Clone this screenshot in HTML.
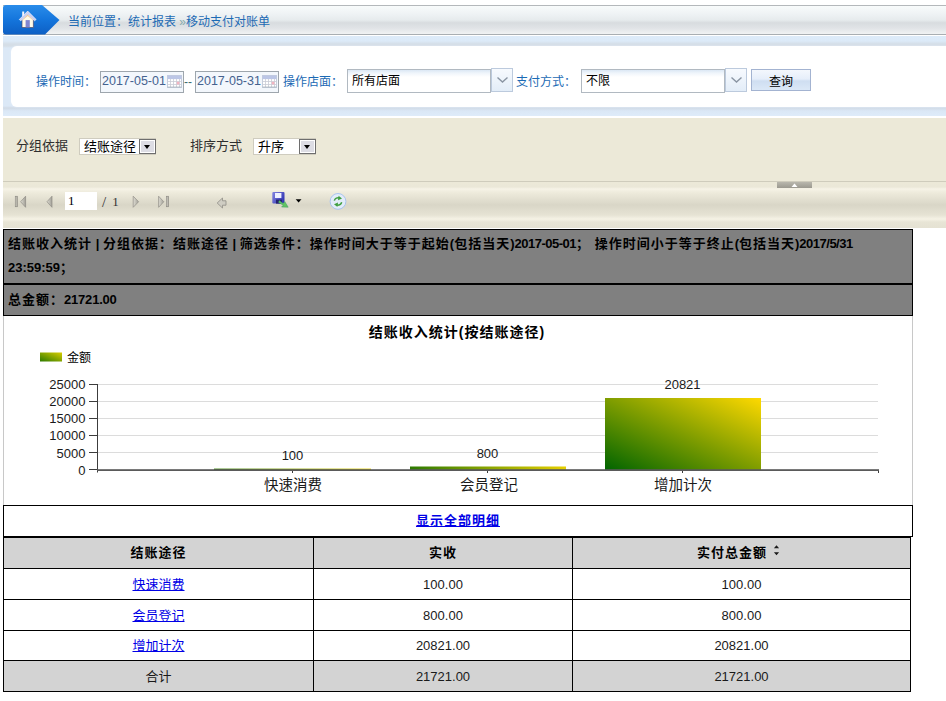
<!DOCTYPE html>
<html lang="zh-CN">
<head>
<meta charset="utf-8">
<title>移动支付对账单</title>
<style>
html,body{margin:0;padding:0;background:#fff;}
body{width:946px;height:701px;position:relative;overflow:hidden;font-family:"Liberation Sans","Noto Sans CJK SC","WenQuanYi Zen Hei",sans-serif;font-size:12px;color:#000;}
.abs{position:absolute;white-space:nowrap;}
/* breadcrumb */
#crumb{left:3px;top:5px;width:943px;height:30px;border-top:1px solid #b4b8bb;border-bottom:1px solid #a9aeb2;box-sizing:border-box;background:linear-gradient(#f8fbfb 0%,#eef2f4 30%,#e6ebed 50%,#d8dcdf 60%,#e0e3e6 78%,#f0f2f3 100%);}
#crumbtxt{left:68px;top:14px;font-size:12px;line-height:16px;color:#1c6ab4;}
/* filter panel */
#fpanel{left:3px;top:36px;width:943px;height:80px;background:linear-gradient(#ddebf9 0,#dceaf8 5px,#d5dee7 8px,#d5dee7 10px,#dbe8f6 12px,#dbe8f6 70px,#d0dae6 72px,#dbe8f6 75px,#deebf9 80px);}
#finner{left:11px;top:46px;width:940px;height:61px;background:#fff;border-radius:6px 0 0 6px;box-shadow:0 0 2px #e8f0fa;}
.lbl{font-size:12px;line-height:16px;color:#1c6ab4;}
.date{box-sizing:border-box;height:22px;width:84px;top:71px;border:1px solid #9ea6ad;background:#f3f7fc;font-size:12.5px;line-height:19px;color:#45628f;padding-left:1px;}
.combo{box-sizing:border-box;top:69px;height:24px;border:1px solid #b1b9c1;background:linear-gradient(#dbe7f4 0px,#eff5fb 3px,#fff 7px);font-size:12px;line-height:22px;padding-left:4px;color:#000;}
.carrow{box-sizing:border-box;top:68px;width:22px;height:24px;border:1px solid #bccadd;background:linear-gradient(#f7fafe,#e3edf8);}
#qbtn{left:751px;top:69px;width:60px;height:22px;box-sizing:border-box;border:1px solid #a3b3d1;background:linear-gradient(#f3f7fd 0%,#e6eefa 45%,#cfdef1 55%,#dbe8f7 100%);text-align:center;font-size:12px;line-height:25px;color:#000;overflow:hidden;}
/* beige area */
#beige{left:3px;top:118px;width:943px;height:110px;background:#ece9d8;}
.blbl{font-size:13px;line-height:16px;color:#2e2e2e;}
.bsel{box-sizing:border-box;height:17px;border:1px solid #cfccbf;background:#fff;font-size:13px;line-height:15px;padding-left:4px;color:#000;}
.bsel i{position:absolute;right:-1px;top:0px;width:17px;height:15px;box-sizing:border-box;border:1px solid #6e6e6e;background:#dddde4;box-shadow:inset 0 0 0 1px #fff;}
.bsel i:after{content:"";position:absolute;left:4px;top:5px;border:3.5px solid transparent;border-top:4px solid #000;border-bottom:0;}

/* toolbar */
#tsep{left:3px;top:181px;width:943px;height:1px;background:#cfccbc;}
#tbar{left:3px;top:182px;width:943px;height:46px;background:linear-gradient(#ece9d8 0px,#ebe8d8 5px,#f6f3e7 7px,#efecdd 10px,#d9d6c7 23px,#e6e3d4 33px,#f5f2e5 37px,#e8e5d6 40px,#e5e2d3 46px);}
#handle{left:777px;top:182px;width:35px;height:6px;background:linear-gradient(#b9b7ad,#9b998f);}
#pg{left:65px;top:192px;width:32px;height:18px;background:#fff;font-family:"Liberation Serif",serif;font-size:13px;line-height:18px;padding-left:3px;box-sizing:border-box;}
#pgof{left:102px;top:193px;font-family:"Liberation Serif",serif;font-size:13px;line-height:16px;color:#333;}
/* report */
#rhead{left:3px;top:229px;width:910px;height:87px;background:#808080;box-sizing:border-box;border:1px solid #000;}
#rline{left:3px;top:283px;width:910px;height:2px;background:#000;}
.rt b{letter-spacing:0;font-weight:bold;}
.rt b.n{letter-spacing:-0.5px;}
.rt{font-family:"Liberation Sans","Noto Sans CJK SC",sans-serif;font-weight:bold;font-size:13px;line-height:24px;color:#000;}
#chartbox{left:3px;top:316px;width:910px;height:189px;box-sizing:border-box;border-left:1px solid #c8c8c8;border-right:1px solid #c8c8c8;background:#fff;}
#showall{font-family:"Liberation Sans","Noto Sans CJK SC",sans-serif;left:3px;top:505px;width:910px;height:32px;box-sizing:border-box;border:1px solid #000;background:#fff;text-align:center;font-size:13px;line-height:30px;font-weight:bold;}
#showall a{letter-spacing:1px;color:#0000e6;text-decoration:underline;}
table#grid{position:absolute;left:3px;top:537px;width:907px;border-collapse:collapse;table-layout:fixed;font-size:13px;}
#grid td,#grid th{border:1px solid #000;text-align:center;padding:0;height:30px;font-weight:normal;color:#1a1a1a;}
#grid th{letter-spacing:1px;font-family:"Liberation Sans","Noto Sans CJK SC",sans-serif;font-weight:bold;background:#d3d3d3;color:#000;}
#grid th span{position:relative;top:-2px;}
#grid tr.tot td{background:#d3d3d3;height:30px;}
#grid tr.s td{height:29px;}
#grid a,#grid td span{color:#0000e6;text-decoration:underline;position:relative;top:-1px;}
#grid td span{color:#1a1a1a;text-decoration:none;}
</style>
</head>
<body>
<!-- breadcrumb -->
<div class="abs" id="crumb"></div>
<svg class="abs" style="left:3px;top:5px" width="58" height="30" viewBox="0 0 58 30">
  <defs><linearGradient id="hb" x1="0" y1="0" x2="0" y2="1"><stop offset="0" stop-color="#2a8cea"/><stop offset="0.5" stop-color="#1475dc"/><stop offset="1" stop-color="#0d5fc4"/></linearGradient></defs>
  <path d="M3 0 H39 L56.5 15 L42 29.5 H3 Q0 29.5 0 26.5 V3 Q0 0 3 0Z" fill="url(#hb)"/>
  <g transform="translate(16,4.5)">
    <rect x="3.2" y="2" width="2" height="5" fill="#f6f6fa"/>
    <path d="M3 10 L8.7 4.6 L14.4 10 V18 H3Z" fill="#fffbe9" stroke="#4a4a6a" stroke-width="0.7"/>
    <path d="M3.2 10.2 L8.7 5 L14.2 10.2 L14.2 11 L8.7 6.6 L3.2 11Z" fill="#f2c79a"/>
    <path d="M0.3 10 L8.7 1.6 L17.1 10 L15.6 11.2 L8.7 4.6 L1.8 11.2Z" fill="#c9cdf0" stroke="#f4f4ff" stroke-width="0.7"/>
    <rect x="6.6" y="10.6" width="4.2" height="7.2" fill="#7f86d2"/>
  </g>
</svg>
<div class="abs" id="crumbtxt">当前位置：统计报表 <span style="color:#8aa">»</span>移动支付对账单</div>

<!-- filter panel -->
<div class="abs" id="fpanel"></div>
<div class="abs" id="finner"></div>
<div class="abs lbl" style="left:36px;top:74px">操作时间：</div>
<div class="abs date" style="left:100px">2017-05-01</div>
<div class="abs" style="left:184px;top:74px;color:#3d6a6e;font-size:12px;line-height:16px">--</div>
<div class="abs date" style="left:195px">2017-05-31</div>
<svg class="abs cal" style="left:167px;top:75px" width="15" height="13" viewBox="0 0 15 13"><rect x="0.5" y="0.5" width="14" height="12" fill="#fff" stroke="#c6cedc"/><rect x="0.5" y="0.5" width="14" height="3.6" fill="#bcc6e6"/><g stroke="#c9ccd6" stroke-width="0.8"><path d="M0.5 6.5H14.5M0.5 9.5H14.5M3.5 4V12.5M6.5 4V12.5M9.5 4V12.5M12.5 4V12.5"/></g><rect x="9.8" y="6.8" width="2.6" height="2.6" fill="#f3b4c0"/><rect x="0.5" y="11.5" width="14" height="1" fill="#9aa6b0" opacity="0.6"/></svg>
<svg class="abs cal" style="left:262px;top:75px" width="15" height="13" viewBox="0 0 15 13"><rect x="0.5" y="0.5" width="14" height="12" fill="#fff" stroke="#c6cedc"/><rect x="0.5" y="0.5" width="14" height="3.6" fill="#bcc6e6"/><g stroke="#c9ccd6" stroke-width="0.8"><path d="M0.5 6.5H14.5M0.5 9.5H14.5M3.5 4V12.5M6.5 4V12.5M9.5 4V12.5M12.5 4V12.5"/></g><rect x="9.8" y="6.8" width="2.6" height="2.6" fill="#f3b4c0"/><rect x="0.5" y="11.5" width="14" height="1" fill="#9aa6b0" opacity="0.6"/></svg>
<div class="abs lbl" style="left:283px;top:74px">操作店面：</div>
<div class="abs combo" style="left:347px;width:144px">所有店面</div>
<div class="abs carrow" style="left:491px"></div>
<div class="abs lbl" style="left:516px;top:74px">支付方式：</div>
<div class="abs combo" style="left:581px;width:144px">不限</div>
<div class="abs carrow" style="left:725px"></div>
<svg class="abs" style="left:491.5px;top:68.5px" width="21" height="23" viewBox="0 0 21 23"><path d="M5.5 8.5 L10.5 13 L15.5 8.5" fill="none" stroke="#8a95a3" stroke-width="1.4"/></svg>
<svg class="abs" style="left:725.5px;top:68.5px" width="21" height="23" viewBox="0 0 21 23"><path d="M5.5 8.5 L10.5 13 L15.5 8.5" fill="none" stroke="#8a95a3" stroke-width="1.4"/></svg>
<div class="abs" id="qbtn">查询</div>

<!-- beige -->
<div class="abs" id="beige"></div>
<div class="abs blbl" style="left:16px;top:138px">分组依据</div>
<div class="abs bsel" style="left:79px;top:138px;width:77px">结账途径<i></i></div>
<div class="abs blbl" style="left:190px;top:138px">排序方式</div>
<div class="abs bsel" style="left:253px;top:138px;width:63px">升序<i></i></div>

<!-- toolbar -->
<div class="abs" id="tsep"></div>
<div class="abs" id="tbar"></div>
<div class="abs" id="handle"></div>
<svg class="abs" style="left:0;top:182px" width="400" height="40" viewBox="0 182 400 40">
  <defs>
    <linearGradient id="gg" x1="0" y1="0" x2="1" y2="0"><stop offset="0" stop-color="#e0ded4"/><stop offset="1" stop-color="#a09e96"/></linearGradient>
    <linearGradient id="sv" x1="0" y1="0" x2="1" y2="0.6"><stop offset="0" stop-color="#8486e0"/><stop offset="1" stop-color="#3336b4"/></linearGradient>
  </defs>
  <!-- first -->
  <rect x="15.3" y="196.3" width="2" height="10.4" fill="url(#gg)" stroke="#8f8d85" stroke-width="0.7"/>
  <path d="M25.6 196.2 L25.6 207.3 L20.6 201.75Z" fill="url(#gg)" stroke="#8f8d85" stroke-width="0.7"/>
  <!-- prev -->
  <path d="M52 196.2 L52 207.3 L47 201.75Z" fill="url(#gg)" stroke="#8f8d85" stroke-width="0.7"/>
  <!-- next -->
  <path d="M133.2 196.2 L133.2 207.3 L138.6 201.75Z" fill="url(#gg)" stroke="#8f8d85" stroke-width="0.7"/>
  <!-- last -->
  <path d="M158.6 196.2 L158.6 207.3 L163.8 201.75Z" fill="url(#gg)" stroke="#8f8d85" stroke-width="0.7"/>
  <rect x="166.4" y="196.3" width="2" height="10.4" fill="url(#gg)" stroke="#8f8d85" stroke-width="0.7"/>
  <!-- back -->
  <path d="M217.2 203 L222.5 198 L222.5 200.8 L226 200.8 L226 205.2 L222.5 205.2 L222.5 208Z" fill="#cfcdc3" stroke="#96948c" stroke-width="0.9"/>
  <!-- save/export -->
  <rect x="272.3" y="192" width="12.2" height="11.6" rx="1" fill="url(#sv)"/>
  <rect x="275" y="193" width="6.4" height="5" fill="#eef0ff"/>
  <rect x="276" y="199.6" width="6" height="4" fill="#23236e"/>
  <path d="M279.2 200.6 L283.2 203.6 L284.8 201.6 L288.2 207.2 L281.6 207 L283.2 205.2 L278.6 202.4Z" fill="#62c462" stroke="#3f9a6a" stroke-width="0.5"/>
  <path d="M295.7 199.2 L301.5 199.2 L298.6 202.4Z" fill="#000"/>
  <!-- refresh -->
  <circle cx="338" cy="201.4" r="7.9" fill="#e2ecf9" stroke="#a3c0ee" stroke-width="0.9"/>
  <path d="M334.3 200.6 A3.9 3.9 0 0 1 339.6 198" fill="none" stroke="#3f9f3f" stroke-width="1.5"/>
  <path d="M338.6 195.8 L342 198.6 L338 200.2Z" fill="#3f9f3f"/>
  <path d="M341.7 202.2 A3.9 3.9 0 0 1 336.4 204.8" fill="none" stroke="#3f9f3f" stroke-width="1.5"/>
  <path d="M337.4 207 L334 204.2 L338 202.6Z" fill="#3f9f3f"/>
</svg>
<svg class="abs" style="left:777px;top:182px" width="35" height="6"><path d="M14.5 5 L17.5 1.5 L20.5 5Z" fill="#fff"/></svg>
<div class="abs" id="pg">1</div>
<div class="abs" id="pgof"><span style="font-size:15px;position:relative;top:0.5px">/</span><span style="margin-left:6px">1</span></div>

<!-- report header -->
<div class="abs" id="rhead"></div>
<div class="abs" id="rline"></div>
<div class="abs rt" id="rt1" style="left:8px;top:232px;letter-spacing:1px">结账收入统计<b> | </b>分组依据：结账途径<b> | </b>筛选条件：操作时间大于等于起始<b>(</b>包括当天<b>)</b><b class="n">2017-05-01</b>；<b style="margin-left:1px"> </b>操作时间小于等于终止<b>(</b>包括当天<b>)</b><b class="n">2017/5/31</b></div>
<div class="abs rt" id="rt2" style="left:8px;top:256px">23:59:59；</div>
<div class="abs rt" id="rt3" style="left:8px;top:288px;letter-spacing:1px">总金额：<b style="letter-spacing:-0.2px">21721.00</b></div>

<!-- chart -->
<div class="abs" id="chartbox"></div>
<svg class="abs" id="chart" style="left:3px;top:317px" width="911" height="188" viewBox="3 317 911 188" font-family="'Liberation Sans','Noto Sans CJK SC','WenQuanYi Zen Hei',sans-serif">
  <defs>
    <linearGradient id="bar" x1="0" y1="1" x2="1" y2="0"><stop offset="0" stop-color="#006400"/><stop offset="0.5" stop-color="#7f9d00"/><stop offset="1" stop-color="#ffd900"/></linearGradient>
    <linearGradient id="barh" x1="0" y1="0" x2="1" y2="0"><stop offset="0" stop-color="#2d7a00"/><stop offset="1" stop-color="#e6cf00"/></linearGradient>
    <linearGradient id="leg" x1="0" y1="1" x2="1" y2="0"><stop offset="0" stop-color="#2d7a00"/><stop offset="1" stop-color="#d8cc00"/></linearGradient>
  </defs>
  <text x="457" y="337" text-anchor="middle" font-size="14" font-weight="bold" font-family="'Liberation Sans','Noto Sans CJK SC',sans-serif" fill="#000" letter-spacing="1">结账收入统计(按结账途径)</text>
  <rect x="40" y="352.5" width="22" height="9" fill="url(#leg)"/>
  <text x="67" y="362" font-size="12" fill="#000">金额</text>
  <g stroke="#dcdcdc" stroke-width="1">
    <line x1="98" y1="384.5" x2="878" y2="384.5"/>
    <line x1="98" y1="401.5" x2="878" y2="401.5"/>
    <line x1="98" y1="418.5" x2="878" y2="418.5"/>
    <line x1="98" y1="435.5" x2="878" y2="435.5"/>
    <line x1="98" y1="452.5" x2="878" y2="452.5"/>
  </g>
  <rect x="214" y="468.6" width="157" height="1.4" fill="url(#barh)"/>
  <rect x="410" y="466.5" width="156" height="3.5" fill="url(#barh)"/>
  <rect x="605" y="398" width="156" height="72" fill="url(#bar)"/>
  <g stroke="#3c3c3c" stroke-width="1">
    <line x1="97.5" y1="384" x2="97.5" y2="472.5"/>
    <line x1="89" y1="384.5" x2="98" y2="384.5"/>
    <line x1="89" y1="401.5" x2="98" y2="401.5"/>
    <line x1="89" y1="418.5" x2="98" y2="418.5"/>
    <line x1="89" y1="435.5" x2="98" y2="435.5"/>
    <line x1="89" y1="452.5" x2="98" y2="452.5"/>
    <line x1="89" y1="469.5" x2="98" y2="469.5"/>
    <line x1="292.5" y1="470" x2="292.5" y2="473"/>
    <line x1="487.5" y1="470" x2="487.5" y2="473"/>
    <line x1="682.5" y1="470" x2="682.5" y2="473"/>
    <line x1="878.5" y1="470" x2="878.5" y2="473"/>
  </g>
  <rect x="97" y="469.2" width="782" height="1.8" fill="#5a5a5a"/>
  <g font-size="13" fill="#1a1a1a" text-anchor="end">
    <text x="85.5" y="389">25000</text>
    <text x="85.5" y="406">20000</text>
    <text x="85.5" y="423.3">15000</text>
    <text x="85.5" y="440">10000</text>
    <text x="85.5" y="457.5">5000</text>
    <text x="85.5" y="474.5">0</text>
  </g>
  <g font-size="13" fill="#1a1a1a" text-anchor="middle">
    <text x="292.5" y="460">100</text>
    <text x="487.5" y="458">800</text>
    <text x="682.5" y="389">20821</text>
  </g>
  <g font-size="14.5" fill="#1a1a1a" text-anchor="middle">
    <text x="293" y="490">快速消费</text>
    <text x="489" y="490">会员登记</text>
    <text x="683" y="490">增加计次</text>
  </g>
</svg>

<!-- table -->
<div class="abs" id="showall"><a>显示全部明细</a></div>
<table id="grid">
  <colgroup><col style="width:310px"><col style="width:259px"><col style="width:338px"></colgroup>
  <tr><th><span>结账途径</span></th><th><span>实收</span></th><th><span style="left:-3px">实付总金额<svg width="7" height="11" viewBox="0 0 7 11" style="vertical-align:1px;margin-left:6px"><path d="M0.9 3.3 L3.5 0.3 L6.1 3.3Z M0.9 7.2 L6.1 7.2 L3.5 10.2Z" fill="#1a1a1a"/></svg></span></th></tr>
  <tr><td><a>快速消费</a></td><td>100.00</td><td>100.00</td></tr>
  <tr><td><a>会员登记</a></td><td>800.00</td><td>800.00</td></tr>
  <tr class="s"><td><a>增加计次</a></td><td>20821.00</td><td>20821.00</td></tr>
  <tr class="tot"><td><span>合计</span></td><td>21721.00</td><td>21721.00</td></tr>
</table>
</body>
</html>
